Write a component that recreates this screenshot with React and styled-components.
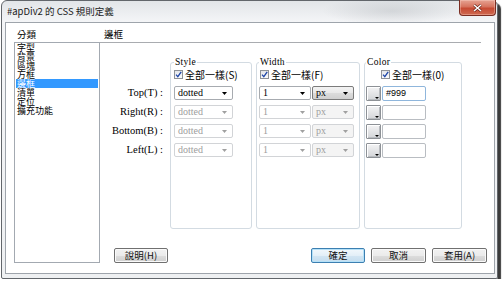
import React from 'react';
import styled, { createGlobalStyle } from 'styled-components';

const cjk = '"Noto Sans CJK TC", "Liberation Sans", sans-serif';
const serif = '"Liberation Serif", "DejaVu Serif", serif';

const GlobalStyle = createGlobalStyle`
  html, body {
    margin: 0;
    padding: 0;
    background: #fff;
  }
  body {
    font-family: ${cjk};
    color: #000;
  }
`;

const Window = styled.div`
  box-sizing: border-box;
  width: 497px;
  height: 279px;
  margin-left: 1px;
  display: flex;
  flex-direction: column;
  padding: 0 2px 4px 3px;
  border: 1px solid #62666b;
  border-radius: 6px 6px 2px 2px;
  background:
    radial-gradient(ellipse 70px 14px at 390px 10px, rgba(150, 155, 160, 0.28), transparent),
    linear-gradient(to bottom, #e2e5e8 0, #f4f5f7 21px, #eef0f2 100%);
  box-shadow: 3px 3px 1px rgba(25, 25, 25, 0.85);
`;

const TitleBar = styled.div`
  height: 21px;
  display: flex;
  justify-content: space-between;
  align-items: flex-start;
`;

const Title = styled.div`
  padding-left: 2px;
  font-size: 9.5px;
  line-height: 20px;
  color: #1b1b1b;
`;

const CloseButton = styled.div`
  box-sizing: border-box;
  width: 37px;
  height: 16px;
  margin-top: -1px;
  margin-right: -1px;
  display: flex;
  align-items: center;
  justify-content: center;
  border: 1px solid #7a2d22;
  border-top: none;
  border-radius: 0 0 4px 4px;
  background: linear-gradient(to bottom, #e6a393 0%, #d6735e 45%, #c64a33 55%, #cf6a51 100%);
  box-shadow: inset 0 0 0 1px rgba(255, 220, 210, 0.35);
`;

const Client = styled.div`
  flex: 1;
  display: grid;
  grid-template-columns: 86px 1fr;
  grid-template-rows: 16px 1fr;
  padding: 4px 7px 10px 8px;
  border: 1px solid #9ea4ab;
  background: #fff;
  min-height: 0;
`;

const SideLabel = styled.div`
  padding-left: 3px;
  font-size: 9.5px;
  line-height: 14px;
`;

const Heading = styled.div`
  box-sizing: border-box;
  margin-right: 6px;
  padding-left: 4px;
  font-size: 9.5px;
  line-height: 14px;
  border-bottom: 1px solid #a9acb0;
`;

const CategoryList = styled.ul`
  margin: -1px 0 0;
  padding: 0;
  list-style: none;
  border: 1px solid #a3a9b1;
`;

const CategoryItem = styled.li`
  margin: 0 1px;
  padding-left: 1px;
  height: 9px;
  font-size: 9px;
  line-height: 9px;
  background: ${(p) => (p.$active ? '#3399ff' : 'transparent')};
  color: ${(p) => (p.$active ? '#fff' : '#000')};
  white-space: nowrap;
`;

const Panel = styled.div`
  display: flex;
  flex-direction: column;
  min-height: 0;
`;

const GroupRow = styled.div`
  margin-top: 14px;
  height: 172px;
  display: flex;
  gap: 4px;
`;

const LabelColumn = styled.div`
  width: 63px;
  padding: 29px 3px 0 0;
  display: flex;
  flex-direction: column;
  align-items: flex-end;
  gap: 5px;
`;

const RowLabel = styled.div`
  height: 14px;
  font-family: ${serif};
  font-size: 10.5px;
  line-height: 14px;
  white-space: pre;
`;

const Group = styled.fieldset`
  box-sizing: border-box;
  width: ${(p) => p.$width}px;
  min-width: 0;
  margin: 0;
  padding: 0 0 0 ${(p) => p.$pad}px;
  border: 1px solid #d3dbe2;
  border-radius: 3px;
`;

const Legend = styled.legend`
  padding: 0 1px;
  font-family: ${serif};
  font-size: 9.5px;
  line-height: 10px;
  letter-spacing: 0.3px;
`;

const Stack = styled.div`
  display: flex;
  flex-direction: column;
  gap: 5px;
`;

const CheckRow = styled.label`
  height: 11px;
  margin: 2px 0 1px ${(p) => p.$indent}px;
  display: flex;
  align-items: center;
  gap: 2px;
  font-size: 10px;
  line-height: 11px;
  white-space: nowrap;
`;

const CheckBox = styled.span`
  box-sizing: border-box;
  width: 9px;
  height: 9px;
  display: flex;
  align-items: center;
  justify-content: center;
  border: 1px solid #8e9297;
  background: linear-gradient(to bottom, #e4e6e9, #fbfbfc);
`;

const Row = styled.div`
  height: 14px;
  display: flex;
  gap: 1px;
`;

const Select = styled.div`
  box-sizing: border-box;
  width: ${(p) => p.$width}px;
  height: 14px;
  display: flex;
  align-items: center;
  justify-content: space-between;
  padding: 0 5px 0 3px;
  border: 1px solid ${(p) => (p.$disabled ? '#d2d4d7' : p.$button ? '#7b7b7b' : '#a7abb0')};
  border-radius: 2px;
  background: ${(p) =>
    p.$button
      ? p.$disabled
        ? '#f4f4f4'
        : 'linear-gradient(to bottom, #f3f3f3 0%, #e9e9e9 50%, #dcdcdc 51%, #d0d0d0 100%)'
      : '#fff'};
  font-family: ${serif};
  font-size: 10px;
  line-height: 12px;
  color: ${(p) => (p.$disabled ? '#9d9d9d' : '#000')};
`;

const Swatch = styled.div`
  box-sizing: border-box;
  width: 15px;
  height: 15px;
  display: flex;
  align-items: flex-end;
  justify-content: flex-end;
  padding: 0 1px 1px 0;
  border: 1px solid #8d9196;
  border-radius: 1px;
  background: linear-gradient(to bottom, #f4f4f5, #d3d5d8);
  box-shadow: inset 1px 1px 0 #fff, inset -1px -1px 0 #b9bcc0;
`;

const TextInput = styled.div`
  box-sizing: border-box;
  width: 44px;
  height: 15px;
  padding-left: 3px;
  border: 1px solid ${(p) => (p.$focus ? '#8fb6dc' : '#b9bdc2')};
  border-radius: 2px;
  background: #fff;
  font-family: "Liberation Sans", sans-serif;
  font-size: 9px;
  line-height: 13px;
`;

const ButtonRow = styled.div`
  margin-top: auto;
  display: flex;
  gap: 6px;
`;

const Button = styled.div`
  box-sizing: border-box;
  width: ${(p) => p.$width}px;
  height: 15px;
  margin-left: ${(p) => p.$before || 0}px;
  display: flex;
  align-items: center;
  justify-content: center;
  border: 1px solid ${(p) => (p.$default ? '#3c7fb1' : '#707070')};
  border-radius: 2px;
  background: ${(p) =>
    p.$default
      ? 'linear-gradient(to bottom, #f2f8fc 0%, #e3eff8 50%, #d3e6f3 51%, #c5ddef 100%)'
      : 'linear-gradient(to bottom, #f2f2f2 0%, #ebebeb 50%, #dddddd 51%, #cfcfcf 100%)'};
  box-shadow: ${(p) => (p.$default ? 'inset 0 0 0 1px #b5e1f8' : 'inset 0 0 0 1px #fafafa')};
  font-size: 9.5px;
  line-height: 13px;
  color: #111;
`;

const Spacer = styled.div`
  flex: 1;
`;

const Arrow = ({ disabled }) => (
  <svg width="5" height="3" viewBox="0 0 5 3">
    <path d="M0 0H5L2.5 3Z" fill={disabled ? '#a0a0a0' : '#000'} />
  </svg>
);

const SmallArrow = () => (
  <svg width="4" height="2" viewBox="0 0 4 2">
    <path d="M0 0H4L2 2Z" fill="#000" />
  </svg>
);

const Tick = () => (
  <svg width="7" height="7" viewBox="0 0 7 7">
    <path d="M1 3.6L2.8 5.6L6.2 0.8" fill="none" stroke="#1f47a8" strokeWidth="1.3" />
  </svg>
);

const SameForAll = ({ hotkey, indent }) => (
  <CheckRow $indent={indent}>
    <CheckBox>
      <Tick />
    </CheckBox>
    <span>全部一樣({hotkey})</span>
  </CheckRow>
);

const categories = ['字型', '背景', '區塊', '方框', '邊框', '清單', '定位', '擴充功能'];
const sides = ['Top(T) :', 'Right(R) :', 'Bottom(B) :', 'Left(L) :'];

const App = () => {
  return (
    <>
      <GlobalStyle />
      <Window>
        <TitleBar>
          <Title>#apDiv2 的 CSS 規則定義</Title>
          <CloseButton>
            <svg width="9" height="8" viewBox="0 0 9 8">
              <path d="M1 1L8 7M8 1L1 7" stroke="#5a1a10" strokeWidth="2.6" />
              <path d="M1 1L8 7M8 1L1 7" stroke="#fff" strokeWidth="1.6" />
            </svg>
          </CloseButton>
        </TitleBar>
        <Client>
          <SideLabel>分類</SideLabel>
          <Heading>邊框</Heading>
          <CategoryList>
            {categories.map((c) => (
              <CategoryItem key={c} $active={c === '邊框'}>
                {c}
              </CategoryItem>
            ))}
          </CategoryList>
          <Panel>
            <GroupRow>
              <LabelColumn>
                {sides.map((s) => (
                  <RowLabel key={s}>{s}</RowLabel>
                ))}
              </LabelColumn>
              <Group $width={82} $pad={3}>
                <Legend>Style</Legend>
                <Stack>
                  <SameForAll hotkey="S" indent={0} />
                  {sides.map((s, i) => (
                    <Row key={s}>
                      <Select $width={59} $disabled={i > 0}>
                        dotted
                        <Arrow disabled={i > 0} />
                      </Select>
                    </Row>
                  ))}
                </Stack>
              </Group>
              <Group $width={104} $pad={2}>
                <Legend>Width</Legend>
                <Stack>
                  <SameForAll hotkey="F" indent={1} />
                  {sides.map((s, i) => (
                    <Row key={s}>
                      <Select $width={52} $disabled={i > 0}>
                        1
                        <Arrow disabled={i > 0} />
                      </Select>
                      <Select $width={42} $disabled={i > 0} $button>
                        px
                        <Arrow disabled={i > 0} />
                      </Select>
                    </Row>
                  ))}
                </Stack>
              </Group>
              <Group $width={98} $pad={1}>
                <Legend>Color</Legend>
                <Stack>
                  <SameForAll hotkey="0" indent={15} />
                  {sides.map((s, i) => (
                    <Row key={s}>
                      <Swatch>
                        <SmallArrow />
                      </Swatch>
                      <TextInput $focus={i === 0}>{i === 0 ? '#999' : ''}</TextInput>
                    </Row>
                  ))}
                </Stack>
              </Group>
            </GroupRow>
            <ButtonRow>
              <Button $width={54} $before={14}>說明(H)</Button>
              <Spacer />
              <Button $width={54} $default>確定</Button>
              <Button $width={55}>取消</Button>
              <Button $width={55}>套用(A)</Button>
            </ButtonRow>
          </Panel>
        </Client>
      </Window>
    </>
  );
};

export default App;
